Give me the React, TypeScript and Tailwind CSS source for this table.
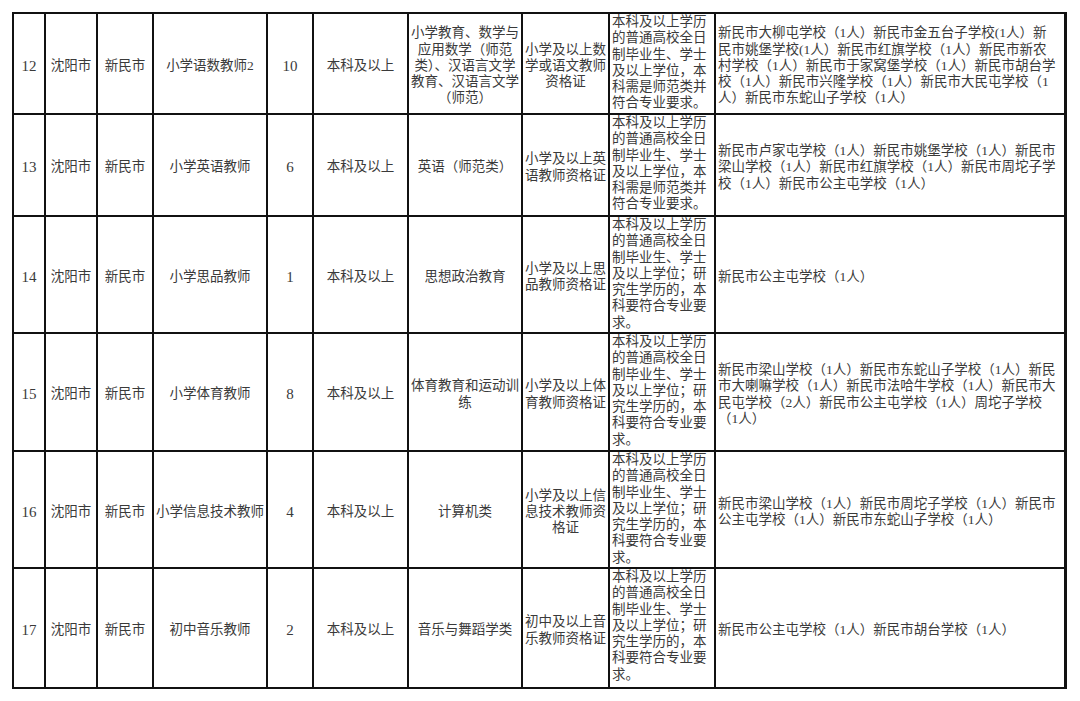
import React from "react";

type Row = {
  no: string;
  post: string;
  count: string;
  major: string[];
  cert: string[];
  req: string[];
  schools: string[];
  h: string;
};

const reqA = [
  "本科及以上学历",
  "的普通高校全日",
  "制毕业生、学士",
  "及以上学位，本",
  "科需是师范类并",
  "符合专业要求。",
];
const reqB = [
  "本科及以上学历",
  "的普通高校全日",
  "制毕业生、学士",
  "及以上学位；研",
  "究生学历的，本",
  "科要符合专业要",
  "求。",
];

const rows: Row[] = [
  {
    no: "12",
    post: "小学语数教师2",
    count: "10",
    major: ["小学教育、数学与", "应用数学（师范", "类）、汉语言文学", "教育、汉语言文学", "（师范）"],
    cert: ["小学及以上数", "学或语文教师", "资格证"],
    req: reqA,
    schools: [
      "新民市大柳屯学校（1人）新民市金五台子学校(1人）新",
      "民市姚堡学校(1人）新民市红旗学校（1人）新民市新农",
      "村学校（1人）新民市于家窝堡学校（1人）新民市胡台学",
      "校（1人）新民市兴隆学校（1人）新民市大民屯学校（1",
      "人）新民市东蛇山子学校（1人）",
    ],
    h: "h-[101px]",
  },
  {
    no: "13",
    post: "小学英语教师",
    count: "6",
    major: ["英语（师范类）"],
    cert: ["小学及以上英", "语教师资格证"],
    req: reqA,
    schools: [
      "新民市卢家屯学校（1人）新民市姚堡学校（1人）新民市",
      "梁山学校（1人）新民市红旗学校（1人）新民市周坨子学",
      "校（1人）新民市公主屯学校（1人）",
    ],
    h: "h-[102px]",
  },
  {
    no: "14",
    post: "小学思品教师",
    count: "1",
    major: ["思想政治教育"],
    cert: ["小学及以上思", "品教师资格证"],
    req: reqB,
    schools: ["新民市公主屯学校（1人）"],
    h: "h-[117px]",
  },
  {
    no: "15",
    post: "小学体育教师",
    count: "8",
    major: ["体育教育和运动训", "练"],
    cert: ["小学及以上体", "育教师资格证"],
    req: reqB,
    schools: [
      "新民市梁山学校（1人）新民市东蛇山子学校（1人）新民",
      "市大喇嘛学校（1人）新民市法哈牛学校（1人）新民市大",
      "民屯学校（2人）新民市公主屯学校（1人）周坨子学校",
      "（1人）",
    ],
    h: "h-[118px]",
  },
  {
    no: "16",
    post: "小学信息技术教师",
    count: "4",
    major: ["计算机类"],
    cert: ["小学及以上信", "息技术教师资", "格证"],
    req: reqB,
    schools: [
      "新民市梁山学校（1人）新民市周坨子学校（1人）新民市",
      "公主屯学校（1人）新民市东蛇山子学校（1人）",
    ],
    h: "h-[117px]",
  },
  {
    no: "17",
    post: "初中音乐教师",
    count: "2",
    major: ["音乐与舞蹈学类"],
    cert: ["初中及以上音", "乐教师资格证"],
    req: reqB,
    schools: ["新民市公主屯学校（1人）新民市胡台学校（1人）"],
    h: "h-[120px]",
  },
];

const cell = "border-r-2 border-b-2 border-[#111] overflow-hidden";
const center = `${cell} flex items-center justify-center text-center pt-[5px]`;

function Lines({ lines }: { lines: string[] }) {
  return (
    <div>
      {lines.map((l, i) => (
        <div key={i} className="whitespace-nowrap">
          {l}
        </div>
      ))}
    </div>
  );
}

export default function App() {
  return (
    <div className="w-[1080px] h-[701px] bg-white overflow-hidden pt-[12px] pl-[12px]">
      <div
        className="inline-block border-l-2 border-t-2 border-[#111] text-[13.5px] leading-[16.3px] text-[#3a3a3a]"
        style={{ fontFamily: '"Liberation Serif", "Noto Sans CJK SC", serif' }}
      >
        {rows.map((r) => (
          <div
            key={r.no}
            className={`grid grid-cols-[32px_52px_56px_114px_46px_95px_114px_87px_106px_351px] ${r.h}`}
          >
            <div className={`${center} text-[15px]`}>{r.no}</div>
            <div className={center}>沈阳市</div>
            <div className={center}>新民市</div>
            <div className={center}>{r.post}</div>
            <div className={`${center} text-[15px]`}>{r.count}</div>
            <div className={center}>本科及以上</div>
            <div className={center}>
              <Lines lines={r.major} />
            </div>
            <div className={center}>
              <Lines lines={r.cert} />
            </div>
            <div className={`${cell} pl-[2px]`}>
              <Lines lines={r.req} />
            </div>
            <div className="border-r-[3px] border-b-2 border-[#111] overflow-hidden flex items-center pl-[2px] pt-[5px]">
              <Lines lines={r.schools} />
            </div>
          </div>
        ))}
      </div>
    </div>
  );
}
